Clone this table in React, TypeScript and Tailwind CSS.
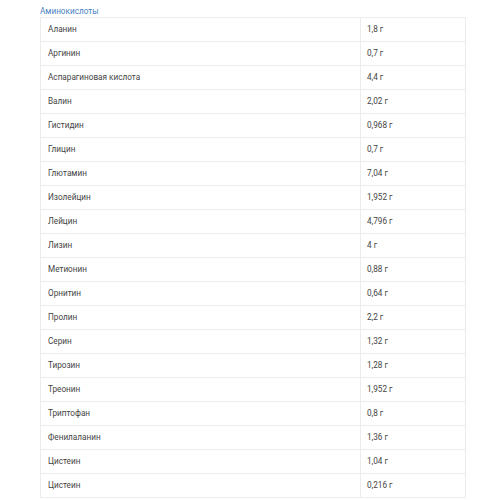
const rows: [string, string][] = [
  ['Аланин', '1,8 г'],
  ['Аргинин', '0,7 г'],
  ['Аспарагиновая кислота', '4,4 г'],
  ['Валин', '2,02 г'],
  ['Гистидин', '0,968 г'],
  ['Глицин', '0,7 г'],
  ['Глютамин', '7,04 г'],
  ['Изолейцин', '1,952 г'],
  ['Лейцин', '4,796 г'],
  ['Лизин', '4 г'],
  ['Метионин', '0,88 г'],
  ['Орнитин', '0,64 г'],
  ['Пролин', '2,2 г'],
  ['Серин', '1,32 г'],
  ['Тирозин', '1,28 г'],
  ['Треонин', '1,952 г'],
  ['Триптофан', '0,8 г'],
  ['Фенилаланин', '1,36 г'],
  ['Цистеин', '1,04 г'],
  ['Цистеин', '0,216 г'],
];

export default function App() {
  return (
    <div className="h-[500px] w-[500px] overflow-hidden bg-white pl-[40px] pt-[6px] font-['Roboto',sans-serif]">
      <div className="h-[11px] text-[8.2px] leading-[11px] text-[#4a7fc0]">Аминокислоты</div>
      <table className="w-[426px] border-collapse text-[8.2px] text-[#444]">
        <tbody>
          {rows.map(([name, value], i) => (
            <tr key={i} className="h-[24px]">
              <td className="w-[320px] border border-[#ececec] pl-[7px]">{name}</td>
              <td className="border border-[#ececec] pl-[6px]">{value}</td>
            </tr>
          ))}
        </tbody>
      </table>
    </div>
  );
}
